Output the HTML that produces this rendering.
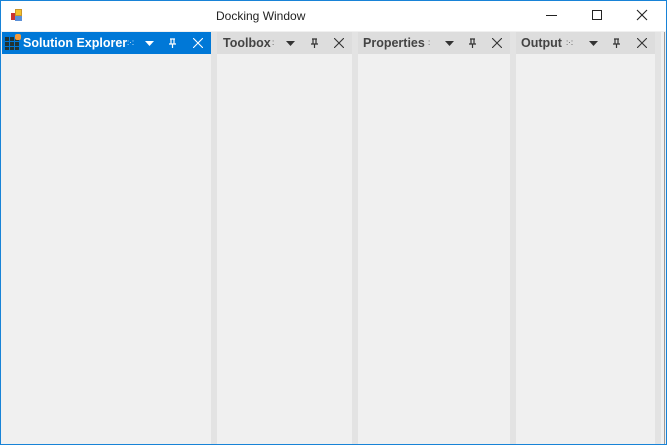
<!DOCTYPE html><html><head><style>
*{margin:0;padding:0;box-sizing:border-box}
body{width:667px;height:445px;background:#f0f0f0;position:relative;overflow:hidden;font-family:"Liberation Sans",sans-serif}
.b{position:absolute}
.hdr{position:absolute;top:32px;height:22px;background:#dddddd;color:#444;font-weight:bold;font-size:12.5px;line-height:22px}
.hdr span{position:absolute;top:0}
.sep{position:absolute;top:32px;bottom:1px;width:6px;background:#e3e3e3}
</style></head><body>
<div class="b" style="left:0;top:0;width:667px;height:31px;background:#fff"></div>
<div class="b" style="left:0;top:0;width:667px;height:1px;background:#1883d7"></div>
<div class="b" style="left:0;top:0;width:1px;height:445px;background:#1883d7"></div>
<div class="b" style="right:0;top:0;width:1px;height:445px;background:#1883d7"></div>
<div class="b" style="left:0;bottom:0;width:667px;height:1px;background:#1883d7"></div>
<div class="b" style="left:11px;top:13px;width:4px;height:7px;background:#c33"></div>
<div class="b" style="left:15px;top:9px;width:7px;height:7px;background:#f2c12e;border:1px solid #c9962a"></div>
<div class="b" style="left:15px;top:16px;width:7px;height:5px;background:#5a8fd8"></div>
<div class="b" style="left:216px;top:9px;font-size:12px;color:#222">Docking Window</div>
<div class="b" style="left:546px;top:15px;width:11px;height:1px;background:#222"></div>
<div class="b" style="left:592px;top:10px;width:10px;height:10px;border:1px solid #222"></div>
<svg class="b" style="left:636px;top:9px" width="12" height="12"><path d="M1 1L11 11M11 1L1 11" stroke="#222" stroke-width="1.1"/></svg>
<div class="sep" style="left:211px"></div>
<div class="sep" style="left:352px"></div>
<div class="sep" style="left:510px"></div>
<div class="sep" style="left:655px"></div>
<div class="b" style="left:664px;top:32px;bottom:1px;width:1px;background:#999"></div>
<div class="hdr" style="left:2px;width:209px;background:#0078d7;color:#fff">
<div class="b" style="left:3px;top:5px;width:14px;height:13px;background:#233;background-image:linear-gradient(90deg,transparent 4px,#0078d7 4px,#0078d7 5px,transparent 5px,transparent 9px,#0078d7 9px,#0078d7 10px,transparent 10px),linear-gradient(transparent 4px,#0078d7 4px,#0078d7 5px,transparent 5px,transparent 9px,#0078d7 9px,#0078d7 10px,transparent 10px)"></div>
<div class="b" style="left:13px;top:2px;width:6px;height:6px;background:#f39a3a;border-radius:2px"></div>
<span style="left:21px">Solution Explorer</span><span style="left:125px;font-size:8px;font-weight:normal">:·:</span>
<svg class="b" style="left:143px;top:9px" width="9" height="5"><path d="M0 0H9L4.5 5Z" fill="#fff"/></svg>
<svg class="b" style="left:166px;top:6px" width="9" height="10"><path d="M2 1H7M3 1V6M6 1V6M1 6H8M4.5 6V10" stroke="#fff" stroke-width="1.2" fill="none"/></svg>
<svg class="b" style="left:191px;top:6px" width="10" height="10"><path d="M0 0L10 10M10 0L0 10" stroke="#fff" stroke-width="1.1"/></svg>
</div>
<div class="hdr" style="left:217px;width:135px"><span style="left:6px">Toolbox</span><span style="left:55px;font-size:8px;font-weight:normal">:</span>
<svg class="b" style="left:69px;top:9px" width="9" height="5"><path d="M0 0H9L4.5 5Z" fill="#333"/></svg>
<svg class="b" style="left:93px;top:6px" width="9" height="10"><path d="M2 1H7M3 1V6M6 1V6M1 6H8M4.5 6V10" stroke="#333" stroke-width="1.2" fill="none"/></svg>
<svg class="b" style="left:117px;top:6px" width="10" height="10"><path d="M0 0L10 10M10 0L0 10" stroke="#333" stroke-width="1.1"/></svg></div>
<div class="hdr" style="left:358px;width:152px"><span style="left:5px">Properties</span><span style="left:70px;font-size:8px;font-weight:normal">:</span>
<svg class="b" style="left:87px;top:9px" width="9" height="5"><path d="M0 0H9L4.5 5Z" fill="#333"/></svg>
<svg class="b" style="left:110px;top:6px" width="9" height="10"><path d="M2 1H7M3 1V6M6 1V6M1 6H8M4.5 6V10" stroke="#333" stroke-width="1.2" fill="none"/></svg>
<svg class="b" style="left:134px;top:6px" width="10" height="10"><path d="M0 0L10 10M10 0L0 10" stroke="#333" stroke-width="1.1"/></svg></div>
<div class="hdr" style="left:516px;width:139px"><span style="left:5px">Output</span><span style="left:50px;font-size:8px;font-weight:normal">:·:</span>
<svg class="b" style="left:73px;top:9px" width="9" height="5"><path d="M0 0H9L4.5 5Z" fill="#333"/></svg>
<svg class="b" style="left:96px;top:6px" width="9" height="10"><path d="M2 1H7M3 1V6M6 1V6M1 6H8M4.5 6V10" stroke="#333" stroke-width="1.2" fill="none"/></svg>
<svg class="b" style="left:121px;top:6px" width="10" height="10"><path d="M0 0L10 10M10 0L0 10" stroke="#333" stroke-width="1.1"/></svg></div>
</body></html>
